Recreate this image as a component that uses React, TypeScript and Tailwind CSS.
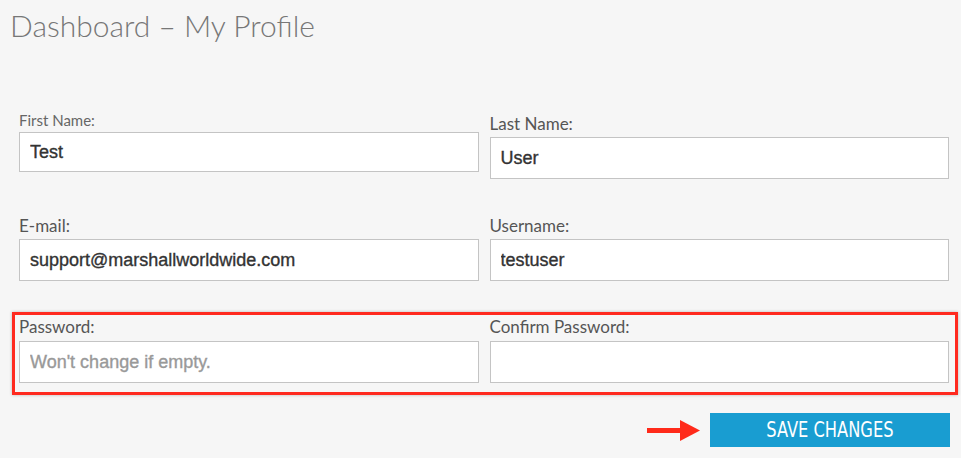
import React from 'react'

const lato = { fontFamily: 'Lato, "Noto Sans", sans-serif' }

function Field({
  label,
  value,
  placeholder,
  small,
}: {
  label: string
  value?: string
  placeholder?: string
  small?: boolean
}) {
  return (
    <div className="flex flex-col">
      <label
        className={
          small
            ? 'text-[15px] leading-[18px] mb-[3px] text-[#666] font-["Lato",sans-serif]'
            : 'text-[17px] leading-[20px] mb-[3px] text-[#555] font-["Lato",sans-serif]'
        }
      >
        {label}
      </label>
      <input
        readOnly
        defaultValue={value}
        placeholder={placeholder}
        className={
          (small ? 'h-[40px] ' : 'h-[42px] ') +
          'w-full bg-white border border-[#c4c4c4] px-[10px] text-[18px] text-[#333] [-webkit-text-stroke:0.35px] placeholder:text-[#999] outline-none font-["Liberation_Sans",Arial,sans-serif]'
        }
      />
    </div>
  )
}

export default function App() {
  return (
    <div className="min-h-screen bg-[#f6f6f6] overflow-hidden">
      <h1
        style={lato}
        className="pl-[10px] mt-[5px] text-[30px] leading-[40px] font-light text-[#777]"
      >
        Dashboard – My Profile
      </h1>

      <div className="pl-[19px] pr-[12px]">
        {/* row 1 */}
        <div className="mt-[66px] grid grid-cols-2 gap-x-[11px] items-start">
          <Field label="First Name:" value="Test" small />
          <div className="pt-[3px]">
            <Field label="Last Name:" value="User" />
          </div>
        </div>

        {/* row 2 */}
        <div className="mt-[37px] grid grid-cols-2 gap-x-[11px]">
          <Field label="E-mail:" value="support@marshallworldwide.com" />
          <Field label="Username:" value="testuser" />
        </div>

        {/* row 3, highlighted */}
        <div className="mt-[31px] -ml-[7px] -mr-[9px] border-[3px] border-[#ff2a1f] pl-[4px] pr-[6px] pt-[2px] pb-[9px] shadow-[0_0_3px_rgba(0,0,0,0.25)]">
          <div className="grid grid-cols-2 gap-x-[11px]">
            <div className="[&_label]:mb-[4px]">
              <Field label="Password:" placeholder="Won't change if empty." />
            </div>
            <div className="[&_label]:mb-[4px]">
              <Field label="Confirm Password:" />
            </div>
          </div>
        </div>

        <div className="mt-[18px] -mr-px flex items-center justify-end gap-[10px]">
          <svg width="53" height="21" viewBox="0 0 53 21">
            <rect x="0" y="8" width="34" height="5" fill="#ff2a1a" />
            <polygon points="33,0 53,10.5 33,21" fill="#ff2a1a" />
          </svg>
          <button className='w-[240px] h-[34px] bg-[#199dd1] text-white text-[21px] leading-[34px] font-["DejaVu_Sans_Condensed","DejaVu_Sans",sans-serif]'>
            <span className="inline-block scale-x-[0.86]">SAVE CHANGES</span>
          </button>
        </div>
      </div>
    </div>
  )
}
